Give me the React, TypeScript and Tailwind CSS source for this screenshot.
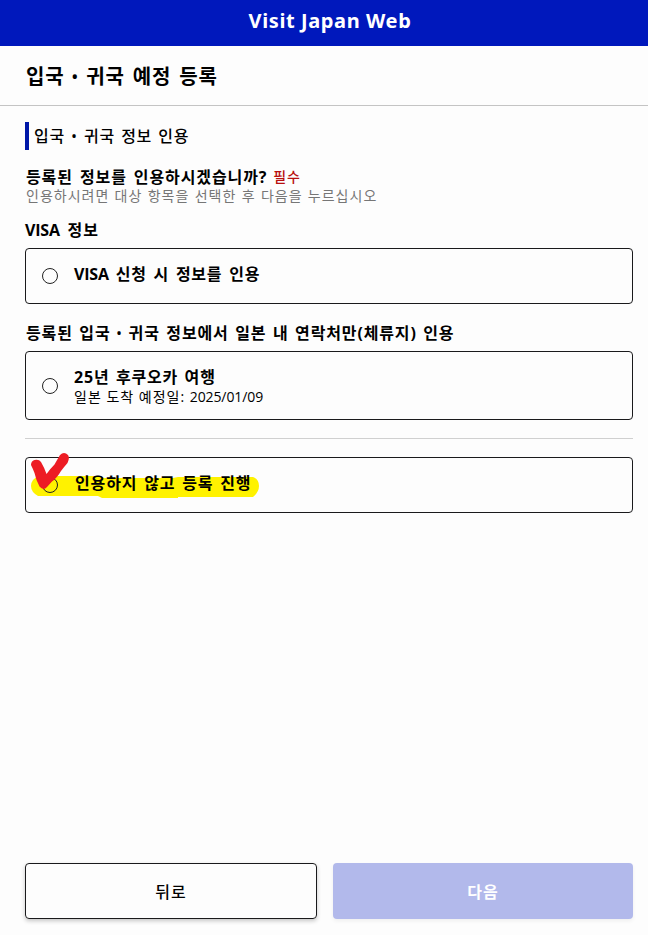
// src/pages/QuoteSelect.tsx

import { useState } from "react";

type RadioProps = {
  value: string;
  selected: string;
  onSelect: (value: string) => void;
};

function Radio({ value, selected, onSelect }: RadioProps) {
  return (
    <input
      type="radio"
      name="quote"
      checked={selected === value}
      onChange={() => onSelect(value)}
      className="size-4 shrink-0 appearance-none rounded-full border border-[#222] checked:border-[5px]"
    />
  );
}

export default function App() {
  const [selected, setSelected] = useState("");

  return (
    <div className="flex h-[935px] w-[648px] flex-col overflow-hidden bg-[#fdfdfd] font-['Open_Sans','Noto_Sans_CJK_KR',sans-serif] text-[16px] leading-5 text-black">
      <header className="flex h-[46px] items-center justify-center bg-[#0018bc] pb-1 pl-3 font-['Noto_Sans'] text-[20px] font-bold tracking-[0.6px] text-white">
        Visit Japan Web
      </header>
      <div className="flex h-[60px] items-center border-b border-[#c4c4c4] px-[26px] pt-0.5">
        <h1 className="text-[20px] font-bold tracking-[0.9px] [word-spacing:1.8px]">
          입국 <span className="-ml-[1.5px] -mr-px font-medium">•</span> 귀국 예정 등록
        </h1>
      </div>

      <main className="flex flex-1 flex-col px-[25px] pr-[15px] pt-4">
        <h2 className="flex h-7 items-center border-l-4 border-[#0018a8] pl-[5px] font-medium tracking-[0.7px] [word-spacing:1.4px]">
          입국 • 귀국 정보 인용
        </h2>

        <p className="mt-[17px] flex h-5 items-center pl-px font-bold tracking-[0.9px] [word-spacing:2px]">
          등록된 정보를 인용하시겠습니까?
          <span className="ml-1.5 text-[14px] font-medium text-[#b80f0f]">필수</span>
        </p>
        <p className="flex h-5 items-center pb-0.5 pl-px text-[14px] tracking-[1px] text-[#767676] [word-spacing:0.7px]">
          인용하시려면 대상 항목을 선택한 후 다음을 누르십시오
        </p>

        <h3 className="mt-[13px] h-5 font-bold tracking-[1px] [word-spacing:2.6px]">
          <span className="tracking-[-0.2px]">VISA</span> 정보
        </h3>
        <label className="mt-2 flex h-14 items-center gap-4 rounded border border-[#1a1a1c] px-4">
          <Radio value="visa" selected={selected} onSelect={setSelected} />
          <span className="mb-1 font-bold tracking-[0.75px] [word-spacing:2px]">
            <span className="tracking-[-0.2px]">VISA</span> 신청 시 정보를 인용
          </span>
        </label>

        <h3 className="mt-[19px] h-5 pl-px font-bold tracking-[0.85px] [word-spacing:1.6px]">
          등록된 입국 <span className="-mx-px font-medium">•</span> 귀국 정보에서 일본 내 연락처만(체류지) 인용
        </h3>
        <label className="mt-2 flex h-[69px] items-center gap-4 rounded border border-[#1a1a1c] px-4">
          <Radio value="trip" selected={selected} onSelect={setSelected} />
          <span className="flex flex-col pt-[3px]">
            <span className="font-bold tracking-[0.8px] [word-spacing:1.6px]">25년 후쿠오카 여행</span>
            <span className="text-[14px] tracking-[1px]">
              일본 도착 예정일: <span className="tracking-[-0.1px]">2025/01/09</span>
            </span>
          </span>
        </label>

        <hr className="mt-[18px] border-[#d0d0d0]" />

        <label className="relative mt-[18px] flex h-14 items-center gap-4 rounded border border-[#1a1a1c] px-4">
          {/* 형광펜 표시 */}
          <svg className="absolute left-0 top-0 h-14 w-60" viewBox="26 458 240 56">
            <path
              d="M39 476 H99 L104 478 H173 L178 477 H253 Q259 479 259 486 Q259 492 253 497 H178 V498 H102 L98 496 H38 Q31 492 31 486 Q31 479 39 476Z"
              fill="#fff200"
            />
          </svg>
          <span className="relative flex">
            <Radio value="none" selected={selected} onSelect={setSelected} />
          </span>
          <span className="relative mb-1 pl-px font-bold tracking-[0.9px] [word-spacing:1.7px]">인용하지 않고 등록 진행</span>
          {/* 체크 표시 */}
          <svg className="absolute -top-1.5 left-0 h-10 w-12" viewBox="26 452 48 40">
            <path
              d="M31 465 Q31 461 34.500 460 Q39 459 41 462 Q44 467 46.500 474 Q50 469 54.500 464.500 Q57 460 60 455 Q64 451 68 455 Q70 458 67.500 463 Q64 467 61 471 Q57 478 52 481.500 L47 487 Q43.500 491 39.500 486.500 Q36 480 34.500 473 Q33 469 31 465Z"
              fill="#ed1c24"
            />
          </svg>
        </label>
      </main>

      <footer className="flex h-[72px] gap-4 pb-4 pl-[25px] pr-[15px]">
        <button className="w-[292px] rounded border border-[#1a1a1c] pt-0.5 font-medium tracking-[1px] shadow-[0_2px_4px_rgba(0,0,0,0.22)]">
          뒤로
        </button>
        <button className="flex-1 rounded bg-[#b2b9eb] pt-0.5 font-bold tracking-[1px] text-white shadow-[0_2px_4px_rgba(0,0,0,0.06)]">
          다음
        </button>
      </footer>
    </div>
  );
}
